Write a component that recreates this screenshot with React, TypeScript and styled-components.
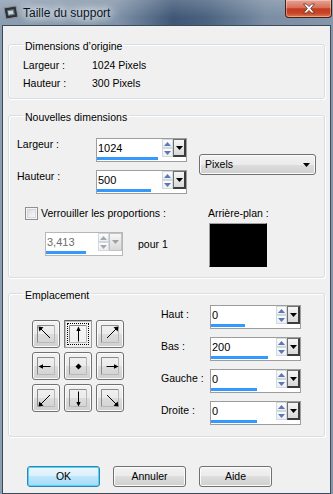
import React from 'react';

import styled, { createGlobalStyle } from 'styled-components';

type Dir = 'nw' | 'n' | 'ne' | 'w' | 'c' | 'e' | 'sw' | 's' | 'se';

interface SpinProps {
  value: string;
  fill: number;
  width?: number;
  disabled?: boolean;
}

const ARROWS: Record<Dir, { line?: [number, number, number, number]; head: string }> = {
  nw: { line: [12.5, 12.5, 3, 3], head: '1,1 6,1.8 1.8,6' },
  n: { line: [9, 16, 9, 4], head: '9,1 6.8,5.5 11.2,5.5' },
  ne: { line: [5.5, 12.5, 15, 3], head: '17,1 12,1.8 16.2,6' },
  w: { line: [13, 9, 3, 9], head: '1,9 5.5,6.8 5.5,11.2' },
  c: { head: '9,6 12,9 9,12 6,9' },
  e: { line: [5, 9, 15, 9], head: '17,9 12.5,6.8 12.5,11.2' },
  sw: { line: [12.5, 5.5, 3, 15], head: '1,17 1.8,12 6,16.2' },
  s: { line: [9, 2, 9, 14], head: '9,17 6.8,12.5 11.2,12.5' },
  se: { line: [5.5, 5.5, 15, 15], head: '17,17 12,16.2 16.2,12' },
};

const ANCHORS: Dir[] = ['nw', 'n', 'ne', 'w', 'c', 'e', 'sw', 's', 'se'];

const MARGINS = [
  { label: 'Haut :', value: '0', fill: 34 },
  { label: 'Bas :', value: '200', fill: 57 },
  { label: 'Gauche :', value: '0', fill: 46 },
  { label: 'Droite :', value: '0', fill: 46 },
];

const AnchorIcon = ({ dir }: { dir: Dir }) => {
  const a = ARROWS[dir];
  return (
    <svg width="18" height="18" viewBox="0 0 18 18">
      <polyline points="0.5,17.5 0.5,0.5 17.5,0.5" fill="none" stroke="#8a8a8a" />
      <polyline points="17.5,0.5 17.5,17.5 0.5,17.5" fill="none" stroke="#b8b8b8" />
      {a.line && (
        <line
          x1={a.line[0] + 0.5}
          y1={a.line[1] + 0.5}
          x2={a.line[2] + 0.5}
          y2={a.line[3] + 0.5}
          stroke="#000"
          strokeWidth="1"
        />
      )}
      <polygon points={a.head} fill="#000" transform="translate(0.5 0.5)" />
    </svg>
  );
};

const Triangle = ({ up = false, color }: { up?: boolean; color: string }) => (
  <svg width="7" height="4" viewBox="0 0 7 4">
    <polygon points={up ? '0,4 7,4 3.5,0' : '0,0 7,0 3.5,4'} fill={color} />
  </svg>
);

const SpinEdit = ({ value, fill, width = 91, disabled = false }: SpinProps) => (
  <EditBox $width={width} $disabled={disabled}>
    <EditTop>
      <EditValue $disabled={disabled}>{value}</EditValue>
      <SpinStack>
        <SpinArrow>
          <Triangle up color={disabled ? '#a8a8a8' : '#5a78b4'} />
        </SpinArrow>
        <SpinArrow>
          <Triangle color={disabled ? '#a8a8a8' : '#5a78b4'} />
        </SpinArrow>
      </SpinStack>
      <DropButton $disabled={disabled}>
        <Triangle color={disabled ? '#a0a0a0' : '#000'} />
      </DropButton>
    </EditTop>
    <EditTrack>
      <EditBar $fill={fill} />
    </EditTrack>
  </EditBox>
);

export default function App() {
  return (
    <>
      <GlobalStyle />
      <Window>
        <TitleBar>
          <TitleIcon width="16" height="16" viewBox="0 0 16 16">
            <polygon points="1,3 13,1 15,12 3,14" fill="#2b2f33" stroke="#8b9299" />
            <polygon points="4,5 11,4 12,10 5,11" fill="#5f6e7c" />
            <polygon points="5,6 10,5.5 10.5,9 5.5,9.8" fill="#c9d3db" />
          </TitleIcon>
          <TitleText>Taille du support</TitleText>
          <CloseButton>
            <svg width="14" height="11" viewBox="0 0 14 11">
              <path
                d="M1.5 1h3L7 3.6 9.5 1h3L8.7 5.5 12.5 10h-3L7 7.4 4.5 10h-3l3.8-4.5z"
                fill="#fff"
                stroke="#5a2a20"
                strokeWidth="0.8"
                strokeLinejoin="round"
              />
            </svg>
          </CloseButton>
        </TitleBar>

        <Client>
          <Group $pt={4} $pb={6} $mt={0}>
            <Legend>Dimensions d’origine</Legend>
            <InfoRow>
              <InfoLabel>Largeur :</InfoLabel>
              <span>1024 Pixels</span>
            </InfoRow>
            <InfoRow>
              <InfoLabel>Hauteur :</InfoLabel>
              <span>300 Pixels</span>
            </InfoRow>
          </Group>

          <Group $pt={15} $pb={10} $mt={8}>
            <Legend>Nouvelles dimensions</Legend>
            <DimTop>
              <FieldStack>
                <FieldRow>
                  <FieldLabel $w={79} $pt={0}>Largeur :</FieldLabel>
                  <SpinEdit value="1024" fill={61} />
                </FieldRow>
                <FieldRow>
                  <FieldLabel $w={79} $pt={0}>Hauteur :</FieldLabel>
                  <SpinEdit value="500" fill={54} />
                </FieldRow>
              </FieldStack>
              <Select>
                <span>Pixels</span>
                <Triangle color="#000" />
              </Select>
            </DimTop>
            <DimBottom>
              <LockColumn>
                <CheckRow>
                  <CheckBox />
                  <span>Verrouiller les proportions :</span>
                </CheckRow>
                <RatioRow>
                  <SpinEdit value="3,413" fill={40} width={78} disabled />
                  <span>pour 1</span>
                </RatioRow>
              </LockColumn>
              <BackgroundColumn>
                <Caption>Arrière-plan :</Caption>
                <Swatch />
              </BackgroundColumn>
            </DimBottom>
          </Group>

          <Group $pt={4} $pb={11} $mt={7}>
            <Legend>Emplacement</Legend>
            <PlaceBody>
              <AnchorGrid>
                {ANCHORS.map(dir =>
                  dir === 'n' ? (
                    <AnchorButton key={dir} $pressed>
                      <FocusRing>
                        <AnchorIcon dir={dir} />
                      </FocusRing>
                    </AnchorButton>
                  ) : (
                    <AnchorButton key={dir}>
                      <AnchorIcon dir={dir} />
                    </AnchorButton>
                  ),
                )}
              </AnchorGrid>
              <FieldStack>
                {MARGINS.map(m => (
                  <FieldRow key={m.label}>
                    <FieldLabel $w={49} $pt={3}>{m.label}</FieldLabel>
                    <SpinEdit value={m.value} fill={m.fill} />
                  </FieldRow>
                ))}
              </FieldStack>
            </PlaceBody>
          </Group>

          <ButtonRow>
            <PushButton $default>OK</PushButton>
            <PushButton>Annuler</PushButton>
            <PushButton>Aide</PushButton>
          </ButtonRow>
        </Client>
      </Window>
    </>
  );
}

const GlobalStyle = createGlobalStyle`
  html, body {
    margin: 0;
    padding: 0;
    background: #5f7388;
  }
  body {
    font-family: 'Liberation Sans', Arial, sans-serif;
    font-size: 10.5px;
    color: #000;
  }
  * {
    box-sizing: border-box;
  }
`;

const Window = styled.div`
  width: 333px;
  height: 494px;
  display: flex;
  flex-direction: column;
  overflow: hidden;
  background: linear-gradient(
    90deg,
    #8d9eb1 0%,
    #8093a8 35%,
    #3f5776 52%,
    #4b6380 62%,
    #7a8da3 80%,
    #8697ab 100%
  );
`;

const TitleBar = styled.div`
  height: 25px;
  display: flex;
  align-items: center;
  background: linear-gradient(180deg, rgba(255, 255, 255, 0.18), rgba(255, 255, 255, 0) 70%);
`;

const TitleIcon = styled.svg`
  flex: none;
  margin-left: 3px;
`;

const TitleText = styled.span`
  margin-left: 4px;
  font-size: 12px;
  line-height: 16px;
  color: #0a1624;
  text-shadow: 0 0 8px #fff, 0 0 10px #fff, 0 0 14px rgba(255, 255, 255, 0.9);
`;

const CloseButton = styled.div`
  align-self: flex-start;
  width: 47px;
  height: 18px;
  margin-left: auto;
  margin-right: 1px;
  display: flex;
  align-items: center;
  justify-content: center;
  border: 1px solid #4a1d14;
  border-top: none;
  border-radius: 0 0 4px 4px;
  background: linear-gradient(180deg, #e6a393 0%, #d8705a 45%, #c23a1d 52%, #c7462a 78%, #df7a52 100%);
  box-shadow: inset 0 0 0 1px rgba(255, 255, 255, 0.35);
`;

const Client = styled.div`
  flex: 1;
  margin: 0 2px;
  padding: 10px 5px 0;
  display: flex;
  flex-direction: column;
  background: #f0f0f0;
  border: 1px solid #3b4b5d;
`;

const Group = styled.fieldset<{ $pt: number; $pb: number; $mt: number }>`
  min-width: 0;
  margin: ${p => p.$mt}px 0 0;
  padding: ${p => p.$pt}px 8px ${p => p.$pb}px;
  border: 1px solid #d5dfe5;
  border-radius: 3px;
  box-shadow: inset 1px 1px 0 #fff, 1px 1px 0 #fff;
`;

const Legend = styled.legend`
  margin-left: 6px;
  padding: 4px 2px 0;
  line-height: 12px;
`;

const InfoRow = styled.div`
  display: flex;
  height: 18px;
  line-height: 18px;
  padding-left: 6px;
`;

const InfoLabel = styled.span`
  width: 69px;
`;

const DimTop = styled.div`
  display: flex;
  align-items: flex-start;
`;

const FieldStack = styled.div`
  display: flex;
  flex-direction: column;
  gap: 8px;
`;

const FieldRow = styled.div`
  display: flex;
  align-items: flex-start;
`;

const FieldLabel = styled.span<{ $w: number; $pt: number }>`
  width: ${p => p.$w}px;
  padding-top: ${p => p.$pt}px;
  line-height: 13px;
`;

const EditBox = styled.div<{ $width: number; $disabled: boolean }>`
  width: ${p => p.$width}px;
  height: 24px;
  display: flex;
  flex-direction: column;
  background: #fff;
  border: 1px solid ${p => (p.$disabled ? '#b7b7b7' : '#9d9d9d')};
`;

const EditTop = styled.div`
  height: 18px;
  display: flex;
`;

const EditValue = styled.span<{ $disabled: boolean }>`
  flex: 1;
  padding-left: 1px;
  font-size: 11px;
  line-height: 18px;
  color: ${p => (p.$disabled ? '#6d6d6d' : '#000')};
`;

const SpinStack = styled.div`
  width: 11px;
  display: flex;
  flex-direction: column;
`;

const SpinArrow = styled.div`
  flex: 1;
  display: flex;
  align-items: center;
  justify-content: center;
  border: 1px solid #d3d8e0;
  background: linear-gradient(180deg, #fdfdfd, #eceef2);
`;

const DropButton = styled.div<{ $disabled: boolean }>`
  width: 13px;
  display: flex;
  align-items: center;
  justify-content: center;
  background: linear-gradient(180deg, #f6f6f6, #d8d8d8);
  border: 1px solid ${p => (p.$disabled ? '#c2c2c2' : '#707070')};
  border-right: ${p => (p.$disabled ? '1px solid #c2c2c2' : '2px solid #3c3c3c')};
  border-bottom: ${p => (p.$disabled ? '1px solid #c2c2c2' : '2px solid #3c3c3c')};
`;

const EditTrack = styled.div`
  height: 4px;
`;

const EditBar = styled.div<{ $fill: number }>`
  width: ${p => p.$fill}px;
  height: 3px;
  background: #3399ff;
`;

const Select = styled.div`
  width: 117px;
  height: 21px;
  margin: 16px 0 0 12px;
  padding: 0 5px 0 5px;
  display: flex;
  align-items: center;
  justify-content: space-between;
  border: 1px solid #707070;
  border-radius: 3px;
  background: linear-gradient(180deg, #f2f2f2 0%, #ebebeb 50%, #dddddd 50%, #cfcfcf 100%);
  box-shadow: inset 0 0 0 1px #fbfbfb;
  line-height: 13px;
`;

const DimBottom = styled.div`
  display: flex;
  margin-top: 13px;
`;

const LockColumn = styled.div`
  width: 191px;
  padding-left: 8px;
`;

const CheckRow = styled.div`
  display: flex;
  align-items: center;
  gap: 3px;
  height: 13px;
  line-height: 13px;
`;

const CheckBox = styled.span`
  width: 13px;
  height: 13px;
  flex: none;
  border: 1px solid #8e8f8f;
  background: linear-gradient(135deg, #cfd2d6 0%, #eef0f2 60%, #fbfbfb 100%);
  box-shadow: inset 0 0 0 1px #f4f4f4, inset 0 0 0 2px #d6d8db;
`;

const RatioRow = styled.div`
  display: flex;
  align-items: center;
  gap: 15px;
  margin-top: 12px;
  padding-left: 20px;
`;

const BackgroundColumn = styled.div`
  display: flex;
  flex-direction: column;
`;

const Caption = styled.span`
  line-height: 13px;
`;

const Swatch = styled.div`
  width: 58px;
  height: 44px;
  margin: 3px 0 0 1px;
  background: #000;
  border: 1px solid #000;
  border-top-color: #a0a0a0;
  border-left-color: #a0a0a0;
`;

const PlaceBody = styled.div`
  display: flex;
  align-items: flex-start;
`;

const AnchorGrid = styled.div`
  display: grid;
  grid-template-columns: repeat(3, 28px);
  grid-auto-rows: 28px;
  gap: 4px;
  margin: 15px 37px 0 15px;
`;

const AnchorButton = styled.div<{ $pressed?: boolean }>`
  display: flex;
  align-items: center;
  justify-content: center;
  border: 1px solid ${p => (p.$pressed ? '#9a9a9a' : '#707070')};
  border-top-color: ${p => (p.$pressed ? '#5c5c5c' : '#707070')};
  border-left-color: ${p => (p.$pressed ? '#7a7a7a' : '#707070')};
  border-radius: ${p => (p.$pressed ? '1px' : '3px')};
  background: ${p =>
    p.$pressed
      ? 'linear-gradient(180deg, #f7f7f7, #eeeeee)'
      : 'linear-gradient(180deg, #f2f2f2 0%, #ebebeb 50%, #dddddd 50%, #cfcfcf 100%)'};
  box-shadow: ${p => (p.$pressed ? 'inset 1px 1px 0 #c4c4c4' : 'inset 0 0 0 1px #fbfbfb')};
`;

const FocusRing = styled.div`
  display: flex;
  padding: 1px;
  border: 1px dotted #000;
`;

const ButtonRow = styled.div`
  display: flex;
  gap: 13px;
  margin-top: 29px;
  padding-left: 19px;
`;

const PushButton = styled.div<{ $default?: boolean }>`
  width: 73px;
  height: 21px;
  display: flex;
  align-items: center;
  justify-content: center;
  border: 1px solid ${p => (p.$default ? '#3c7fb1' : '#707070')};
  border-radius: 3px;
  background: ${p =>
    p.$default
      ? 'linear-gradient(180deg, #eaf6fd 0%, #d9f0fc 50%, #bee6fd 50%, #a7d9f5 100%)'
      : 'linear-gradient(180deg, #f2f2f2 0%, #ebebeb 50%, #dddddd 50%, #cfcfcf 100%)'};
  box-shadow: ${p => (p.$default ? 'inset 0 0 0 1px #48d8fb' : 'inset 0 0 0 1px #fbfbfb')};
  line-height: 13px;
`;
